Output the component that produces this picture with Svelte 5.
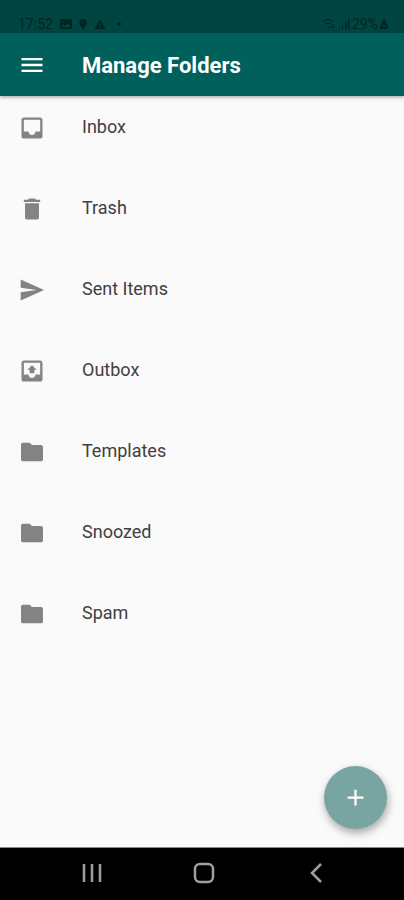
<script>
  const inbox = 'M19 3H5c-1.1 0-2 .9-2 2v14c0 1.1.9 2 2 2h14c1.1 0 2-.9 2-2V5c0-1.1-.9-2-2-2zm0 12h-4c0 1.66-1.35 3-3 3s-3-1.34-3-3H5V5h14v10z';
  const folder = 'M10 4H4.200c-.9 0-1.600.7-1.600 1.600v12.800c0 .9.7 1.600 1.600 1.600h15.600c.9 0 1.600-.7 1.600-1.600V7.600c0-.9-.7-1.600-1.600-1.600H12z';
  const folders = [
    { name: 'Inbox', icon: inbox },
    { name: 'Trash', icon: 'M6 19c0 1.1.9 2 2 2h8c1.1 0 2-.9 2-2V7H6v12zM19 4h-3.5l-1-1h-5l-1 1H5v2h14V4z' },
    { name: 'Sent Items', icon: 'M2.300 21l20-9-20-9v7l13.500 2-13.500 2z' },
    { name: 'Outbox', icon: inbox + 'M8 11h2v3h4v-3h2l-4-4z' },
    { name: 'Templates', icon: folder },
    { name: 'Snoozed', icon: folder },
    { name: 'Spam', icon: folder }
  ];
</script>

<div class="screen">
  <div class="status">
    <div class="group left">
      <span>17:52</span>
      <svg width="12" height="12" viewBox="0 0 12 12"><path fill-rule="evenodd" d="M1 1h10a1 1 0 0 1 1 1v8a1 1 0 0 1-1 1H1a1 1 0 0 1-1-1V2a1 1 0 0 1 1-1zm0 8h10L8 5 5.500 8 3.500 6zM2 3v1h2V3z" /></svg>
      <svg width="8" height="12" viewBox="0 0 8 12"><path d="M4 1a3.700 3.700 0 0 1 3.700 3.700C7.700 7 5 8 5 11H3C3 8 .3 7 .3 4.700A3.700 3.700 0 0 1 4 1z" /></svg>
      <svg width="12" height="12" viewBox="0 0 12 12"><path fill-rule="evenodd" d="M6 1l5.500 10H.5zM5.400 4.500v3h1.200v-3zm0 4v1.200h1.200V8.500z" /></svg>
      <svg class="dot" width="4" height="12" viewBox="0 0 4 12"><circle cx="2" cy="6" r="2" /></svg>
    </div>
    <div class="group right">
      <svg width="14" height="12" viewBox="0 0 14 12"><path class="wave" d="M1 3.500Q6 0 11 3.500M3 6q3-2 6 0M5 8l2 2 2-2M11 6v4M9.500 8.500L11 10l1.500-1.500" /></svg>
      <svg width="12" height="12" viewBox="0 0 12 12"><path d="M1 9h1v2H1zM4 7h1v4H4zM7 4h1.500v7H7zM10 1h1.500v10H10z" /></svg>
      <span>29%</span>
      <svg width="8" height="12" viewBox="0 0 8 12"><path fill-rule="evenodd" d="M3 1h2v1h1v4l2 2v3H0V8l2-2V2h1zm0 6v2h2V7z" /></svg>
    </div>
  </div>

  <header>
    <button class="menu" aria-label="Open menu">
      <svg width="28" height="28" viewBox="0 0 24 24"><path d="M3 18h18v-2H3v2zm0-5h18v-2H3v2zm0-7v2h18V6H3z" /></svg>
    </button>
    <h1>Manage Folders</h1>
  </header>

  <main>
    <ul>
      {#each folders as item}
        <li>
          <button class="row">
            <svg width="28" height="28" viewBox="0 0 24 24" aria-hidden="true"><path d={item.icon} /></svg>
            <span>{item.name}</span>
          </button>
        </li>
      {/each}
    </ul>
    <button class="fab" aria-label="Add folder">
      <svg width="27" height="27" viewBox="0 0 24 24"><path d="M19 13h-6v6h-2v-6H5v-2h6V5h2v6h6z" /></svg>
    </button>
  </main>

  <nav>
    <button aria-label="Recent apps">
      <svg width="24" height="24" viewBox="0 0 24 24"><path d="M4 3v18M12 3v18M20 3v18" /></svg>
    </button>
    <button aria-label="Home">
      <svg width="24" height="24" viewBox="0 0 24 24"><rect x="3" y="3" width="18" height="18" rx="5" /></svg>
    </button>
    <button aria-label="Back">
      <svg width="24" height="24" viewBox="0 0 24 24"><path d="M17 3l-9 9 9 9" /></svg>
    </button>
  </nav>
</div>

<style>
  :global(body) {
    margin: 0;
    background: #fafafa;
  }

  .screen {
    display: flex;
    flex-direction: column;
    min-height: 100vh;
    font-family: Roboto, sans-serif;
    background: #fafafa;
  }

  button {
    display: flex;
    align-items: center;
    padding: 0;
    border: 0;
    background: none;
    font: inherit;
    color: inherit;
    cursor: pointer;
  }

  svg {
    display: block;
    flex: none;
    fill: currentColor;
  }

  .status {
    display: flex;
    justify-content: space-between;
    box-sizing: border-box;
    height: 33px;
    padding: 15px 16px 0 18px;
    background: #004541;
    color: #002623;
    font-size: 14px;
    line-height: 16px;
  }

  .group {
    display: flex;
    align-items: center;
  }

  .left {
    gap: 7px;
  }

  .dot {
    margin-left: 4px;
  }

  .right {
    gap: 2px;
  }

  .wave {
    fill: none;
    stroke: currentColor;
  }

  header {
    position: relative;
    display: flex;
    align-items: center;
    gap: 36px;
    height: 63px;
    padding: 0 18px;
    background: #00605b;
    color: #fff;
    box-shadow: 0 1px 4px rgba(0, 0, 0, 0.4);
  }

  h1 {
    margin: 2px 0 0;
    font-size: 22px;
    line-height: 28px;
    font-weight: 700;
  }

  main {
    position: relative;
    flex: 1;
    border-bottom: 1px solid #8a8a8a;
  }

  ul {
    margin: 0;
    padding: 0;
    list-style: none;
  }

  .row {
    align-items: flex-start;
    gap: 36px;
    box-sizing: border-box;
    width: 100%;
    height: 81px;
    padding: 18px;
    color: #838383;
    text-align: left;
  }

  .row span {
    color: #404040;
    font-size: 18px;
    line-height: 26px;
  }

  .fab {
    position: absolute;
    right: 17px;
    bottom: 18px;
    justify-content: center;
    width: 63px;
    height: 63px;
    border-radius: 50%;
    background: #78a5a2;
    color: #fff;
    box-shadow: 1px 4px 8px rgba(0, 0, 0, 0.35);
  }

  nav {
    display: flex;
    justify-content: center;
    box-sizing: border-box;
    height: 52px;
    padding: 0 0 2px 4px;
    background: #000;
    color: #a0a0a0;
  }

  nav button {
    justify-content: center;
    width: 28%;
  }

  nav svg {
    fill: none;
    stroke: currentColor;
    stroke-width: 2.5;
  }
</style>
